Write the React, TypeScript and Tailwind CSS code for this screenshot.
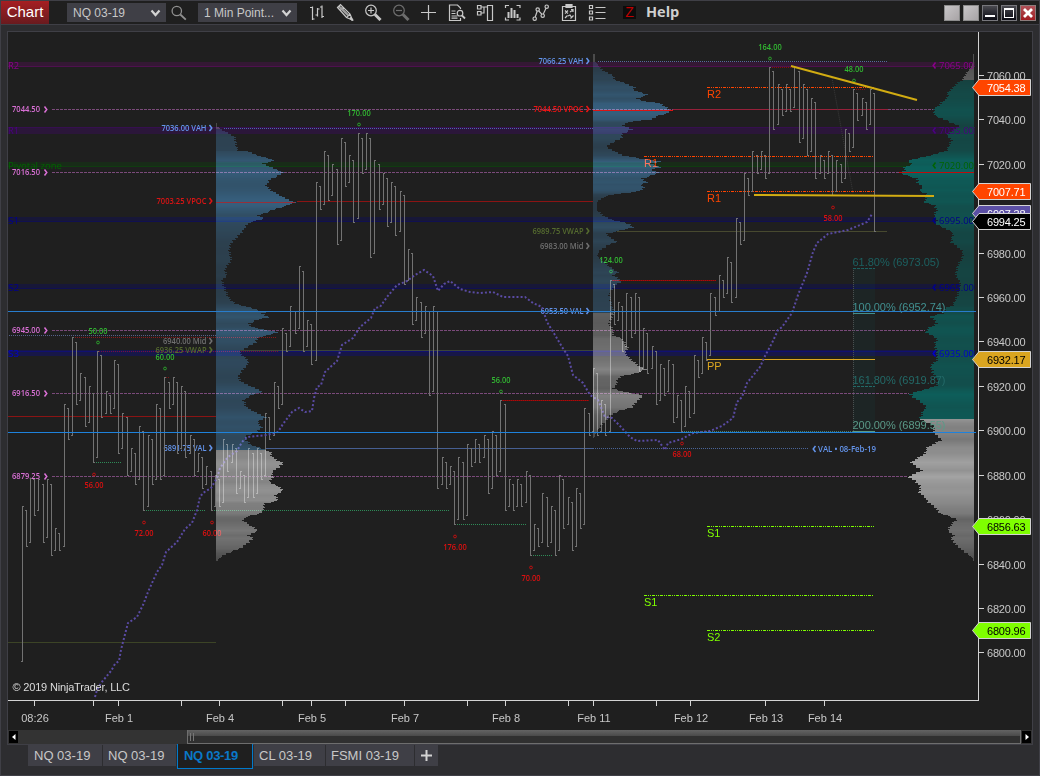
import type { ReactNode } from "react";

// --- DATA ---
// point-o bars as [high, low], evenly spaced; up and down bars alternate
const BAR_START = 22;
const BAR_STEP = 4.2;
const bars: [number, number][] = [
  [506, 661], [510, 546], [478, 542], [479, 515], [479, 510], [484, 542], [479, 537], [484, 555], [528, 550], [533, 550],
  [404, 546], [408, 439], [337, 435], [342, 404], [373, 400], [377, 426], [386, 422], [393, 462], [351, 457], [355, 417],
  [391, 413], [395, 413], [360, 408], [364, 453], [413, 448], [417, 475], [448, 471], [453, 484], [426, 479], [431, 510],
  [435, 506], [439, 484], [404, 479], [408, 479], [377, 475], [382, 408], [377, 404], [382, 453], [386, 448], [391, 457],
  [435, 453], [439, 475], [453, 471], [457, 488], [466, 484], [471, 510], [475, 506], [479, 506], [439, 502], [444, 471],
  [444, 462], [448, 493], [471, 488], [475, 502], [448, 497], [453, 497], [448, 493], [453, 479], [413, 475], [417, 439],
  [382, 435], [386, 408], [328, 404], [333, 351], [306, 346], [311, 333], [266, 328], [271, 351], [320, 346], [324, 364],
  [182, 360], [186, 209], [151, 204], [155, 200], [164, 195], [169, 244], [138, 240], [142, 186], [155, 182], [160, 222],
  [133, 218], [138, 173], [133, 169], [138, 257], [160, 253], [164, 209], [173, 204], [178, 226], [182, 222], [186, 235],
  [191, 231], [195, 284], [249, 280], [253, 324], [297, 320], [302, 337], [306, 333], [311, 395], [306, 391], [311, 488],
  [457, 484], [462, 488], [466, 484], [471, 524], [457, 519], [462, 519], [444, 515], [448, 466], [439, 462], [444, 462],
  [435, 457], [439, 493], [431, 488], [435, 475], [400, 471], [404, 510], [479, 506], [484, 510], [479, 506], [484, 506],
  [471, 502], [475, 555], [524, 550], [528, 546], [493, 542], [497, 546], [506, 542], [510, 555], [475, 550], [479, 528],
  [497, 524], [502, 550], [488, 546], [493, 528], [408, 524], [413, 435], [368, 431], [373, 435], [400, 431], [404, 435],
  [280, 431], [284, 324], [302, 320], [306, 351], [293, 346], [297, 337], [293, 333], [297, 371], [328, 368], [333, 373],
  [346, 368], [351, 404], [364, 400], [368, 395], [360, 391], [364, 422], [395, 417], [400, 431], [386, 426], [391, 417],
  [355, 413], [360, 377], [337, 373], [342, 360], [293, 355], [297, 315], [275, 311], [280, 297], [257, 293], [262, 302],
  [218, 297], [222, 244], [173, 240], [178, 195], [151, 191], [155, 173], [151, 169], [155, 178], [67, 173], [71, 129],
  [84, 124], [89, 115], [84, 111], [89, 111], [67, 107], [71, 142], [84, 138], [89, 155], [98, 151], [102, 178],
  [155, 173], [160, 178], [151, 173], [155, 195], [160, 191], [164, 182], [129, 178], [133, 151], [89, 147], [93, 120],
  [98, 115], [102, 129], [89, 124], [93, 231],
];

type Point = [number, number];

// volume profiles as [y, width]
const profileLeft: Point[] = [
  [123, 1], [126, 1], [127, 3], [128.7, 5], [131.7, 10], [136.7, 19], [145, 20], [150, 22], [151, 32], [155, 42],
  [160, 59], [163, 47], [166.7, 55], [171.7, 67], [175.7, 62], [178.3, 55], [181.7, 52], [185, 50], [190, 55], [195, 64],
  [200, 74], [202, 79], [205, 71], [208.3, 60], [211.7, 51], [215, 42], [218.3, 48], [221.7, 34], [226.7, 29], [230, 27],
  [236.7, 21], [243, 15], [250, 13], [260, 15], [266.7, 10], [271.7, 9], [275, 11], [280, 5], [283, 7], [288, 9],
  [296.7, 12], [303, 19], [308, 37], [311.7, 49], [313, 46], [316.7, 53], [319, 42], [323, 33], [326.7, 36], [329, 47],
  [331.5, 62], [335, 51], [337, 42], [341.7, 40], [346.7, 31], [351.7, 23], [360, 32], [365, 31], [370, 26], [376.7, 22],
  [381.7, 26], [386.7, 37], [391, 46], [395, 35], [400, 27], [407, 31], [411.7, 39], [416.7, 50], [421.7, 41], [426.7, 46],
  [431.7, 41], [435, 31], [438, 29], [444, 34], [448.3, 47], [451.7, 55], [456.7, 56], [463, 67], [466.7, 63], [471.7, 56],
  [476.7, 57], [481.7, 53], [485, 61], [490, 67], [495, 59], [500, 62], [503, 49], [510, 47], [513, 44], [516.7, 29],
  [520, 27], [525, 34], [530, 42], [535, 32], [538, 37], [543, 31], [548, 24], [553, 11], [558, 3], [561, 1],
];
const profileMiddle: Point[] = [
  [54, 2], [61, 2], [62.7, 4], [66.7, 6], [71.7, 13], [75, 20], [79, 21], [83, 33], [86.7, 42], [89, 40],
  [91.7, 47], [94.3, 55], [98, 44], [100.7, 51], [103, 68], [106.7, 73], [110, 77], [113, 74], [116, 63], [119, 58],
  [121.7, 34], [125, 30], [129, 39], [133, 30], [138, 28], [142.7, 18], [146.7, 13], [151, 22], [155, 30], [158, 47],
  [161, 68], [163, 58], [166.7, 68], [169, 58], [172, 66], [175.7, 57], [178, 49], [181.7, 54], [184, 48], [187, 51],
  [190, 48], [192, 37], [194, 20], [197, 10], [201.7, 4], [210, 4], [215, 10], [219, 18], [221.7, 30], [224, 37],
  [227, 40], [230, 27], [233, 14], [237, 17], [241, 24], [245, 14], [250, 7], [255, 4], [260, 9], [265, 15],
  [270, 22], [272, 25], [275, 20], [278, 25], [281, 28], [284, 23], [288, 20], [292, 16], [307, 19], [312, 21],
  [316.7, 19], [323, 16], [330, 20], [335, 20], [338, 29], [343, 32], [348.7, 35], [352, 32], [355, 34], [360, 39],
  [365, 45], [369, 53], [373, 42], [376, 27], [380, 24], [385, 23], [388, 20], [391, 30], [395, 50], [398, 47],
  [403, 42], [407, 39], [410, 27], [415, 17], [420, 13], [425, 8], [430, 4], [435, 2], [438, 1],
];
const profileRight: Point[] = [
  [54, 1], [63, 1], [68, 4], [75, 9], [79, 11], [80, 12], [83, 17], [88, 22], [93, 27], [96.7, 26],
  [101.7, 32], [105, 35], [109, 41], [115, 39], [118, 32], [123, 21], [125.7, 15], [130, 21], [135, 27], [140, 22],
  [145, 25], [150, 27], [153, 37], [156.7, 51], [160, 66], [164, 62], [166.7, 70], [170, 69], [172.3, 75], [175, 67],
  [178, 57], [183, 56], [187, 51], [190, 55], [193, 48], [196.7, 47], [201.7, 50], [205, 39], [210, 37], [215, 40],
  [220, 37], [223, 39], [227, 31], [232, 21], [241.7, 23], [246.7, 16], [251.7, 11], [258, 12], [266.7, 17], [275, 18],
  [281.7, 14], [286.7, 14], [293, 16], [300, 19], [305, 21], [308, 29], [313, 31], [315.7, 44], [318, 41], [323, 37],
  [328, 46], [331.7, 48], [335, 42], [338.3, 37], [345, 39], [351.7, 37], [360, 37], [365, 43], [373, 41], [380, 36],
  [385, 37], [388, 46], [391, 57], [394, 64], [398, 59], [401.7, 53], [406.7, 47], [410, 51], [415, 52], [418, 55],
  [420, 51], [423, 44], [426.7, 39], [431.7, 41], [435, 37], [439, 32], [443, 39], [446.7, 47], [453, 49], [458, 57],
  [462, 63], [466.7, 57], [470, 52], [473, 59], [476.3, 66], [480, 59], [486.7, 53], [491.7, 55], [496.7, 49], [501.7, 46],
  [506.7, 39], [513, 34], [516.7, 22], [519, 17], [523, 22], [530, 26], [535, 20], [538, 23], [543, 19], [548, 14],
  [553, 7], [558, 1], [561, 0.5],
];

const vwapCurve =
  "95,697 97,690 101,683 111,671 115,664 119,661 121,650 123,642 128,623 137,617 143,605 148,592 157,572 162,565 166,552 177,542 185,529 192,523 197,510 200,497 203,493 211,488 217,478 220,468 228,457 237,451 242,442 247,437 267,435 278,432 283,424 292,412 299,408 305,412 312,411 314,398 317,387 321,385 325,372 337,361 342,345 353,338 360,327 371,318 375,308 380,307 387,297 397,285 407,281 415,275 424,270 433,276 438,291 444,284 450,281 460,289 470,292 480,293 493,292 503,297 525,297 533,303 542,307 547,322 555,335 562,347 568,356 573,375 583,383 590,395 598,400 605,417 612,418 620,426 630,437 637,441 658,440 665,450 668,443 682,439 693,433 710,431 722,426 733,418 737,402 742,397 747,383 760,367 765,356 772,343 778,330 782,327 792,313 798,295 807,273 813,252 817,243 828,234 848,230 860,225 867,222 872,214";

const zones = [
  { name: "R2", value: "7065.00", y: 62, h: 5, color: "#8b008b", opacity: 0.2, edge: 66 },
  { name: "R1", value: "7035.00", y: 127, h: 7, color: "#4b0082", opacity: 0.28, edge: 127 },
  { name: "Pivotal zone", value: "7020.00", y: 162, h: 5, color: "#006400", opacity: 0.2, edge: 166 },
  { name: "S1", value: "6995.00", y: 217, h: 5, color: "#00008b", opacity: 0.24, edge: 221 },
  { name: "S2", value: "6965.00", y: 284, h: 5, color: "#00008b", opacity: 0.24, edge: 288 },
  { name: "S3", value: "6935.00", y: 350, h: 6, color: "#0000cd", opacity: 0.24, edge: 351 },
];

const nakedLevels = [
  { y: 109, end: 933, price: "7044.50" },
  { y: 172, end: 899, price: "7016.50" },
  { y: 330, end: 925, price: "6945.00" },
  { y: 393, end: 909, price: "6916.50" },
  { y: 476, end: 908, price: "6879.25" },
];

const profileTags = [
  { x: 206.5, y: 131, w: 45, text: "7036.00 VAH", color: "#6495ed" },
  { x: 206.5, y: 204, w: 50, text: "7003.25 VPOC", color: "#dc1414" },
  { x: 206.5, y: 344, w: 43.5, text: "6940.00 Mid", color: "#707070" },
  { x: 206.5, y: 353, w: 51, text: "6936.25 VWAP", color: "#556b2f" },
  { x: 206.5, y: 451, w: 43, text: "6891.75 VAL", color: "#6495ed" },
  { x: 583.5, y: 64, w: 45, text: "7066.25 VAH", color: "#6495ed" },
  { x: 583.5, y: 112, w: 50, text: "7044.50 VPOC", color: "#f01414" },
  { x: 583.5, y: 234, w: 51, text: "6989.75 VWAP", color: "#556b2f" },
  { x: 583.5, y: 249, w: 43.5, text: "6983.00 Mid", color: "#707070" },
  { x: 583.5, y: 314, w: 43, text: "6953.50 VAL", color: "#6495ed" },
];

const swings = [
  { x: 98, y: 334, dot: 342.5, text: "50.00", up: true },
  { x: 165, y: 360, dot: 368.5, text: "60.00", up: true },
  { x: 359, y: 116, dot: 124.5, text: "170.00", up: true },
  { x: 501, y: 383, dot: 391.5, text: "56.00", up: true },
  { x: 611, y: 263, dot: 271.5, text: "124.00", up: true },
  { x: 770, y: 50, dot: 58.5, text: "164.00", up: true },
  { x: 854, y: 72, dot: 80.5, text: "48.00", up: true },
  { x: 94, y: 488, dot: 474.5, text: "56.00", up: false },
  { x: 144, y: 536, dot: 522.5, text: "72.00", up: false },
  { x: 212, y: 536, dot: 522.5, text: "60.00", up: false },
  { x: 455, y: 550, dot: 536.5, text: "176.00", up: false },
  { x: 531, y: 581, dot: 567.5, text: "70.00", up: false },
  { x: 682, y: 457, dot: 443.5, text: "68.00", up: false },
  { x: 833, y: 221, dot: 207.5, text: "58.00", up: false },
];

// horizontal lines: [x1, x2, y, color, dash]
const lines: [number, number, number, string, string?][] = [
  [224, 593, 128, "#4d62b0", "1 1"],
  [598, 887, 61, "#58689c", "1 1"],
  [297, 593, 201, "#8b1414"],
  [673, 888, 109, "#96203a"],
  [240, 593, 350, "#3b4438"],
  [617, 887, 231, "#47492f"],
  [265, 593, 448, "#465f92"],
  [593, 808, 448, "#4a6498", "1 1"],
  [9, 216, 335, "#55618a", "1 1"],
  [8, 216, 416, "#8b1414"],
  [8, 216, 642, "#3c4426"],
  [73, 277, 337, "#8b1a1a", "1 1"],
  [97, 279, 351, "#7c1430", "1 1"],
  [164, 169, 377, "#7c1414", "1 1"],
  [501, 589, 400, "#b00808", "1 1"],
  [502, 589, 400, "#780e0e", "1 1"],
  [611, 716, 280, "#b00808", "1 1"],
  [612, 716, 280, "#780e0e", "1 1"],
  [770, 795, 67, "#8b0c0c", "1 1"],
  [854, 866, 89, "#8b0c0c", "1 1"],
  [94, 122, 462, "#2e8b57", "1 1"],
  [144, 206, 510, "#2e8b57", "1 1"],
  [212, 450, 510, "#2e8b57", "1 1"],
  [455, 526, 524, "#2e8b57", "1 1"],
  [531, 552, 555, "#2e8b57", "1 1"],
  [682, 875, 431, "#4d7a62", "1 1"],
];

const pivots = [
  { x: 707, end: 874, y: 87, label: "R2", color: "#ff4500", dashed: true, base: 98 },
  { x: 644, end: 874, y: 156, label: "R1", color: "#ff4500", dashed: true, base: 167 },
  { x: 707, end: 874, y: 191, label: "R1", color: "#ff4500", dashed: true, base: 202 },
  { x: 707, end: 875, y: 359, label: "PP", color: "#daa520", dashed: false, base: 370 },
  { x: 707, end: 875, y: 526, label: "S1", color: "#7fff00", dashed: true, base: 537 },
  { x: 644, end: 874, y: 595, label: "S1", color: "#7fff00", dashed: true, base: 606 },
  { x: 707, end: 875, y: 630, label: "S2", color: "#7fff00", dashed: true, base: 641 },
];

const fibs = [
  { y: 266, line: 268, w: 87, text: "61.80% (6973.05)", color: "#1c6060", dash: "3 1" },
  { y: 311, line: 313, w: 93, text: "100.00% (6952.74)", color: "#419090", dash: undefined },
  { y: 384, line: 386, w: 93, text: "161.80% (6919.87)", color: "#236a68", dash: "3 1" },
  { y: 429, line: 431, w: 93, text: "200.00% (6899.55)", color: "#5a9a88", dash: undefined },
];

const priceTags = [
  { y: 213.5, text: "6997.38", fill: "#5b4fa5", ink: "#ffffff" },
  { y: 87.5, text: "7054.38", fill: "#ff4500", ink: "#ffffff" },
  { y: 191.5, text: "7007.71", fill: "#ff4500", ink: "#ffffff" },
  { y: 221.5, text: "6994.25", fill: "#000000", ink: "#ffffff" },
  { y: 359.5, text: "6932.17", fill: "#daa520", ink: "#000000" },
  { y: 526.5, text: "6856.63", fill: "#7fff00", ink: "#000000" },
  { y: 630.5, text: "6809.96", fill: "#7fff00", ink: "#000000" },
];

const prices = [7060, 7040, 7020, 7000, 6980, 6960, 6940, 6920, 6900, 6880, 6860, 6840, 6820, 6800];
const timeTicks = [34, 93, 118, 181, 219, 282, 311, 345, 404, 467, 505, 568, 593, 656, 690, 765, 824];
const dates = [
  { x: 35, text: "08:26" },
  { x: 119, text: "Feb 1" },
  { x: 220, text: "Feb 4" },
  { x: 312, text: "Feb 5" },
  { x: 405, text: "Feb 7" },
  { x: 506, text: "Feb 8" },
  { x: 594, text: "Feb 11" },
  { x: 691, text: "Feb 12" },
  { x: 766, text: "Feb 13" },
  { x: 825, text: "Feb 14" },
];

const tabs = [
  { name: "NQ 03-19", className: "w-[74px] pl-[6px] bg-[#3f3f46] text-[#c8c8c8]" },
  { name: "NQ 03-19", className: "w-[73px] pl-[5px] bg-[#3f3f46] text-[#c8c8c8]" },
  { name: "NQ 03-19", className: "h-[25px] w-[76px] -mt-px pl-[6px] border border-t-0 border-[#007acc] bg-[#1f1f1f] font-bold text-[#0a78c8] tracking-[-0.3px]" },
  { name: "CL 03-19", className: "w-[71px] pl-[5px] bg-[#3f3f46] text-[#c8c8c8]" },
  { name: "FSMI 03-19", className: "w-[88px] pl-[5px] bg-[#3f3f46] text-[#c8c8c8]" },
];

// --- UTILS ---
function widthAt(points: Point[], y: number) {
  for (let i = 1; i < points.length; i++) {
    const [y0, w0] = points[i - 1];
    const [y1, w1] = points[i];
    if (y <= y1) return w0 + ((w1 - w0) * (y - y0)) / (y1 - y0);
  }
  return points[points.length - 1][1];
}

function shade(ratio: number, low: number[], high: number[]) {
  const t = Math.min(1, ratio);
  return `rgb(${low.map((c, i) => Math.round(c + (high[i] - c) * t)).join(",")})`;
}

// --- CHART PARTS ---
function HLine({ x1, x2, y, color, dash }: { x1: number; x2: number; y: number; color: string; dash?: string }) {
  return <path d={`M${x1} ${y + 0.5}H${x2}`} stroke={color} strokeDasharray={dash} shapeRendering="crispEdges" />;
}

interface ProfileProps {
  points: Point[];
  x: number;
  mirrored?: boolean;
  valueArea: [number, number];
  low: number[];
  high: number[];
}

function VolumeProfile({ points, x, mirrored, valueArea, low, high }: ProfileProps) {
  const top = points[0][0];
  const bottom = points[points.length - 1][0];
  const greyLow = mirrored ? [78, 78, 78] : [48, 48, 48];
  const greyHigh = mirrored ? [164, 164, 164] : [130, 130, 130];
  const rows: ReactNode[] = [];
  for (let y = top; y < bottom; y++) {
    const base = widthAt(points, y);
    const jitter = base > 6 ? ((y * 7) % 5) * 0.7 - 1.4 : 0;
    const w = Math.max(1, Math.round(base + jitter));
    const inside = y >= valueArea[0] && y < valueArea[1];
    const fill = inside ? shade(base / 72, low, high) : shade(base / 66, greyLow, greyHigh);
    rows.push(<rect key={y} x={mirrored ? x - w : x} y={y} width={w} height={1} fill={fill} />);
  }
  return (
    <g className={mirrored ? undefined : "mix-blend-screen"} shapeRendering="crispEdges">
      {rows}
    </g>
  );
}

function Chevron({ x, y, color, left }: { x: number; y: number; color: string; left?: boolean }) {
  const d = left ? `M${x + 1.5} ${y - 3}l-2.3 3l2.3 3` : `M${x - 1.5} ${y - 3}l2.3 3l-2.3 3`;
  return <path d={d} fill="none" stroke={color} strokeWidth={1.5} />;
}

function SmallText({ x, y, w, color, children }: { x: number; y: number; w: number; color: string; children: string }) {
  return (
    <text
      x={x}
      y={y}
      fill={color}
      textLength={w}
      lengthAdjust="spacingAndGlyphs"
      className="font-['Open_Sans',sans-serif] text-[8.5px] font-semibold"
    >
      {children}
    </text>
  );
}

function ZoneText({ x, y, w, color, children }: { x: number; y: number; w: number; color: string; children: string }) {
  return (
    <text
      x={x}
      y={y}
      fill={color}
      textLength={w}
      lengthAdjust="spacingAndGlyphs"
      className="font-['Open_Sans',sans-serif] text-[9.5px] font-medium"
    >
      {children}
    </text>
  );
}

function PriceBars() {
  return (
    <g fill="none" stroke="#727272" shapeRendering="crispEdges">
      {bars.map(([high, low], i) => {
        const x = Math.floor(BAR_START + i * BAR_STEP);
        const up = i % 2 === 0;
        const openY = (up ? low : high) + 0.5;
        const closeY = (up ? high : low) + 0.5;
        return (
          <path key={i} d={`M${x + 0.5} ${high}V${low + 1}M${x - 1} ${openY}h1M${x + 1} ${closeY}h1`} />
        );
      })}
    </g>
  );
}

function Chart() {
  return (
    <svg width={1024} height={698} viewBox="8 32 1024 698" className="block isolate bg-[#1f1f1f]">
      <rect x={8} y={32} width={1024} height={698} fill="#1f1f1f" />

      {/* zones */}
      {zones.map((z) => (
        <g key={z.name}>
          <rect x={8} y={z.y} width={967} height={z.h} fill={z.color} opacity={z.opacity} />
          <rect x={8} y={z.edge} width={967} height={1} fill={z.color} opacity={0.3} />
          <ZoneText x={8} y={z.y + 7} w={z.name.length > 2 ? 54 : 11} color={z.color}>
            {z.name}
          </ZoneText>
        </g>
      ))}

      <VolumeProfile points={profileRight} x={974} mirrored valueArea={[80, 419]} low={[24, 58, 57]} high={[12, 98, 94]} />
      <HLine x1={899} x2={974} y={172} color="#c00c0c" />

      {nakedLevels.map((l) => (
        <g key={l.price}>
          <HLine x1={52} x2={l.end} y={l.y} color="#7a4a7a" dash="3 1" />
          <SmallText x={12} y={l.y + 3} w={28} color="#da70d6">
            {l.price}
          </SmallText>
          <Chevron x={46} y={l.y + 0.5} color="#da70d6" />
        </g>
      ))}

      {lines.map(([x1, x2, y, color, dash], i) => (
        <HLine key={i} x1={x1} x2={x2} y={y} color={color} dash={dash} />
      ))}

      {profileTags.map((t) => (
        <g key={t.text}>
          <SmallText x={t.x - t.w} y={t.y} w={t.w} color={t.color}>
            {t.text}
          </SmallText>
          <Chevron x={t.x + 4.5} y={t.y - 3} color={t.color} />
        </g>
      ))}
      <Chevron x={814} y={449} color="#6495ed" left />
      <SmallText x={818} y={452} w={58} color="#6495ed">
        VAL • 08-Feb-19
      </SmallText>

      {/* fibonacci extension */}
      <rect x={853} y={268} width={22} height={163} fill="#008080" opacity={0.06} />
      <path d="M853.5 268V431" stroke="#4a4f4f" strokeDasharray="1 1" shapeRendering="crispEdges" />
      <path d="M832 78L853 193" stroke="#3a3a3a" strokeDasharray="1 1" />
      {fibs.map((f) => (
        <g key={f.text}>
          <HLine x1={853} x2={875} y={f.line} color={f.color} dash={f.dash} />
          <text x={852.5} y={f.y} fill={f.color} textLength={f.w} className="font-['Liberation_Sans',sans-serif] text-[11px]">
            {f.text}
          </text>
        </g>
      ))}

      {pivots.map((p) => (
        <g key={`${p.label}${p.y}`}>
          <HLine x1={p.x} x2={p.end} y={p.y} color={p.color} dash={p.dashed ? "3 1 1 1 1 1" : undefined} />
          <text x={p.x} y={p.base} fill={p.color} className="font-['Liberation_Sans',sans-serif] text-[11px]">
            {p.label}
          </text>
        </g>
      ))}

      <PriceBars />
      <polyline points={vwapCurve} fill="none" stroke="#5a4ba3" strokeWidth={2} strokeDasharray="2 2.1" />

      {swings.map((s) => {
        const w = s.text.length > 5 ? 23.5 : 19;
        return (
          <g key={`${s.x}-${s.y}`}>
            <SmallText x={s.x - w / 2} y={s.y} w={w} color={s.up ? "#32b832" : "#dc1010"}>
              {s.text}
            </SmallText>
            <circle cx={s.x} cy={s.dot} r={1.4} fill="none" stroke={s.up ? "#2ca02c" : "#c01010"} />
          </g>
        );
      })}

      {zones.map((z) => (
        <g key={z.value}>
          <Chevron x={934} y={z.y + 3.5} color={z.color} left />
          <ZoneText x={939} y={z.y + 7} w={35} color={z.color}>
            {z.value}
          </ZoneText>
        </g>
      ))}

      <VolumeProfile points={profileLeft} x={216} valueArea={[129, 450]} low={[12, 28, 40]} high={[26, 72, 106]} />
      <VolumeProfile points={profileMiddle} x={593} valueArea={[62, 313]} low={[12, 28, 40]} high={[26, 72, 106]} />
      <HLine x1={216} x2={295} y={202} color="#96303a" />
      <HLine x1={593} x2={673} y={110} color="#dc1414" />

      <HLine x1={8} x2={976} y={311} color="#287ccc" />
      <HLine x1={8} x2={976} y={432} color="#1e82dc" />

      {/* trend lines */}
      <path d="M791 66L917 100M754 195L934 196" stroke="#d2ac12" strokeWidth={2} />

      <text x={12.5} y={691} fill="#dcdcdc" textLength={117.5} className="font-['Liberation_Sans',sans-serif] text-[11px]">
        © 2019 NinjaTrader, LLC
      </text>

      {/* axes */}
      <path d="M8 700.5H978.5V32" fill="none" stroke="#d3d3d3" shapeRendering="crispEdges" />
      {prices.map((p) => {
        const y = Math.floor(75.5 + (7060 - p) * 2.2205);
        return (
          <g key={p}>
            <path d={`M979 ${y + 0.5}h5`} stroke="#d3d3d3" shapeRendering="crispEdges" />
            <text x={987} y={y + 5} fill="#c8c8c8" textLength={38.5} className="font-['Liberation_Sans',sans-serif] text-[11px]">
              {p}.00
            </text>
          </g>
        );
      })}
      {timeTicks.map((x) => (
        <path key={x} d={`M${x + 0.5} 701v5`} stroke="#d3d3d3" shapeRendering="crispEdges" />
      ))}
      {dates.map((d) => (
        <text key={d.x} x={d.x} y={722} textAnchor="middle" fill="#c8c8c8" className="font-['Liberation_Sans',sans-serif] text-[11px]">
          {d.text}
        </text>
      ))}
      {priceTags.map((t) => (
        <g key={t.text}>
          <path
            d={`M972.5 ${t.y}L979 ${t.y - 8}H1030.5V${t.y + 8}H979Z`}
            fill={t.fill}
            stroke="#d3d3d3"
          />
          <text x={987} y={t.y + 4.5} fill={t.ink} textLength={38.5} className="font-['Liberation_Sans',sans-serif] text-[11px]">
            {t.text}
          </text>
        </g>
      ))}
    </svg>
  );
}

// --- TOOLBAR ---
function Icon({ children }: { children: ReactNode }) {
  return (
    <svg width={18} height={18} viewBox="0 0 18 18" fill="none" stroke="#c8c8c8" strokeWidth={1.2} className="shrink-0">
      {children}
    </svg>
  );
}

function Select({ label }: { label: string }) {
  return (
    <div className="flex h-[19px] w-[99px] items-center justify-between bg-[#3f3f46] pl-[6px] pr-[5px] text-[12px] text-[#c8c8c8]">
      <span className="whitespace-nowrap">{label}</span>
      <svg width={11} height={8} viewBox="0 0 11 8" fill="none" stroke="#d3d3d3" strokeWidth={2.2}>
        <path d="M1.5 1.5l4 4.5l4-4.5" />
      </svg>
    </div>
  );
}

function Toolbar() {
  return (
    <header className="flex h-6 shrink-0 items-center border-b border-[#3f3f46] bg-[#1f1f1f]">
      <div className="flex h-[23px] w-12 items-center justify-center bg-linear-to-b from-[#a61e22] to-[#6a1a1e] text-[15px] text-white">
        Chart
      </div>
      <div className="ml-[18px]">
        <Select label="NQ 03-19" />
      </div>
      <svg width={16} height={16} viewBox="0 0 16 16" fill="none" stroke="#909090" className="ml-[5px] shrink-0">
        <circle cx={5.8} cy={6} r={4.7} strokeWidth={1.3} />
        <path d="M9.3 9.5l5.5 5.2" strokeWidth={1.8} />
      </svg>
      <div className="ml-[11px]">
        <Select label="1 Min Point..." />
      </div>
      <div className="-mt-px ml-[11px] flex items-center gap-[10px]">
        <Icon>
          <path d="M2 4.5h2.5M4.5 3.500V17M4.5 16H6.500M9.500 5v8.500M7.500 12h2M9.500 6h2M14 2.500v12.500M12 4h2M14 13.500h2" />
        </Icon>
        <Icon>
          <path d="M1.5 4.5l3-3 9.5 9.5 2.5 6-6-2.5zM3 3.2l9.5 9.3M4.5 7.2l3-3M11 14.2l3-3" />
          <path d="M3 5l1.8-1.8 8.2 8.6-1.4 1.4z" fill="#a0a0a0" stroke="none" />
          <path d="M14 14.5l2.8 3" strokeWidth={2} />
        </Icon>
        <Icon>
          <circle cx={7} cy={7.5} r={5.3} />
          <path d="M4 7.5h6M7 4.5v6" />
          <path d="M11 11.5l5.5 5.5" strokeWidth={3} />
        </Icon>
        <Icon>
          <g stroke="#6e6e6e">
            <circle cx={7} cy={7.5} r={5.3} />
            <path d="M4 7.5h6" />
            <path d="M11 11.5l5.5 5.5" strokeWidth={3} />
          </g>
        </Icon>
        <Icon>
          <path d="M1 9.5h15M8.5 2v15" />
        </Icon>
        <Icon>
          <path d="M12.5 6V5l-3-3h-8v15.5h11V15M3.5 8h4M3.5 10.5h4M3.5 13h6M3.5 15.2h6" />
          <circle cx={12} cy={10.2} r={2.8} />
          <path d="M14 12.5l3 3" strokeWidth={1.8} />
        </Icon>
        <Icon>
          <path d="M1.5 2.5h3.5v3.5h-3.5zM1.5 8.5h3.5v3.5h-3.5zM11.5 2.5h5v15h-5zM5 4h6.5M5 10h3V4" />
        </Icon>
        <Icon>
          <path d="M1.5 5V2.5H5M12.5 2.5H16V5M16 14.5V17H12.5M5 17H1.5V14.5" />
          <path d="M4.5 15V9M7.5 15V5M10.5 15V7M13.5 15v-4" strokeWidth={2} />
        </Icon>
        <Icon>
          <circle cx={2.7} cy={15.7} r={1.7} />
          <circle cx={5.7} cy={6.5} r={1.7} />
          <circle cx={10.7} cy={12.7} r={1.7} />
          <circle cx={14.7} cy={3.7} r={1.7} />
          <path d="M3.2 14l2-5.8M6.8 8l3 3.2M11.3 11l2.7-5.7" />
        </Icon>
        <Icon>
          <path d="M2.5 3.5h13v14h-13z" />
          <path d="M6 1.5h6v3H6z" fill="#c8c8c8" />
          <path d="M5 7.5l3 3M8 7.5l-3 3M10 9l3-2M11 6.5h2v2.5M5 15l2.5-2.5M8 13l2-1 2 3M10.5 15.5l3-3" />
        </Icon>
        <Icon>
          <path d="M1.5 2.5h3v3h-3zM1.5 8h3v3h-3zM1.5 14h3v3h-3zM7.5 4.5h10M7.5 9.5h10M7.5 15.5h10" />
        </Icon>
      </div>
      <div className="-mt-px ml-[17px] flex h-[13px] w-[13px] items-center justify-center bg-[#0c0c0c] text-[14px] text-[#c00000]">Z</div>
      <span className="-mt-[2px] ml-[10px] font-['Open_Sans',sans-serif] text-[14.5px] font-bold text-[#d0d0d0]">Help</span>
      <div className="mr-[3px] ml-auto flex gap-[3px] pt-px">
        <div className="h-4 w-4 border border-[#8c8c8c] bg-linear-to-br from-[#c8c6c8] to-[#a8a4a6]" />
        <div className="h-4 w-4 border border-[#8c8c8c] bg-linear-to-br from-[#c8c6c8] to-[#a8a4a6]" />
        <div className="flex h-4 w-4 items-end justify-center border border-[#77777c] bg-linear-to-b from-[#4a4a50] to-[#0c0c14] pb-[3px]">
          <div className="h-[2px] w-[10px] bg-white" />
        </div>
        <div className="flex h-4 w-4 items-center justify-center border border-[#77777c] bg-linear-to-b from-[#4a4a50] to-[#0c0c14]">
          <div className="h-[10px] w-[10px] border border-t-2 border-white" />
        </div>
        <div className="flex h-4 w-4 items-center justify-center border border-[#8c7c7c] bg-linear-to-b from-[#b05058] to-[#a01820]">
          <svg width={10} height={10} viewBox="0 0 10 10" stroke="#fff" strokeWidth={2.8}>
            <path d="M1 1l8 8M9 1l-8 8" />
          </svg>
        </div>
      </div>
    </header>
  );
}

function ScrollBar() {
  return (
    <div className="flex h-[14px] items-stretch bg-[#333333]">
      <div className="my-px ml-px flex w-[9px] items-center justify-center bg-black">
        <svg width={4} height={6} viewBox="0 0 4 6">
          <path d="M3.5 0v6L0 3z" fill="#fff" />
        </svg>
      </div>
      <div className="ml-[169px] flex w-[834px] items-center gap-[2px] border-r border-b border-l border-[#6e6e6e] bg-linear-to-b from-[#646464] from-0% via-[#484848] via-50% to-[#303030] to-50% pl-[2px]">
        <div className="h-2 w-px bg-[#777777]" />
        <div className="h-2 w-px bg-[#777777]" />
      </div>
      <div className="my-px mr-px ml-auto flex w-[9px] items-center justify-center bg-black">
        <svg width={4} height={6} viewBox="0 0 4 6">
          <path d="M0.5 0v6L4 3z" fill="#fff" />
        </svg>
      </div>
    </div>
  );
}

// --- MAIN COMPONENT ---
export default function App() {
  return (
    <div className="flex h-[776px] w-[1040px] flex-col overflow-hidden border border-[#3f3f46] bg-[#2d2d30] font-['Liberation_Sans',Arial,sans-serif]">
      <Toolbar />
      <main className="mx-[6px] mt-[6px] h-[714px] shrink-0 border border-[#3f3f46]">
        <Chart />
        <ScrollBar />
      </main>
      <nav className="ml-[27px] flex items-start gap-px text-[13px]">
        {tabs.map((tab, i) => (
          <button key={i} className={`flex h-[21px] shrink-0 items-center whitespace-nowrap ${tab.className}`}>
            {tab.name}
          </button>
        ))}
        <button className="flex h-[21px] w-[23px] items-center justify-center bg-[#3f3f46]">
          <svg width={11} height={11} viewBox="0 0 11 11" stroke="#d3d3d3" strokeWidth={2}>
            <path d="M0 5.5h11M5.5 0v11" />
          </svg>
        </button>
      </nav>
    </div>
  );
}
